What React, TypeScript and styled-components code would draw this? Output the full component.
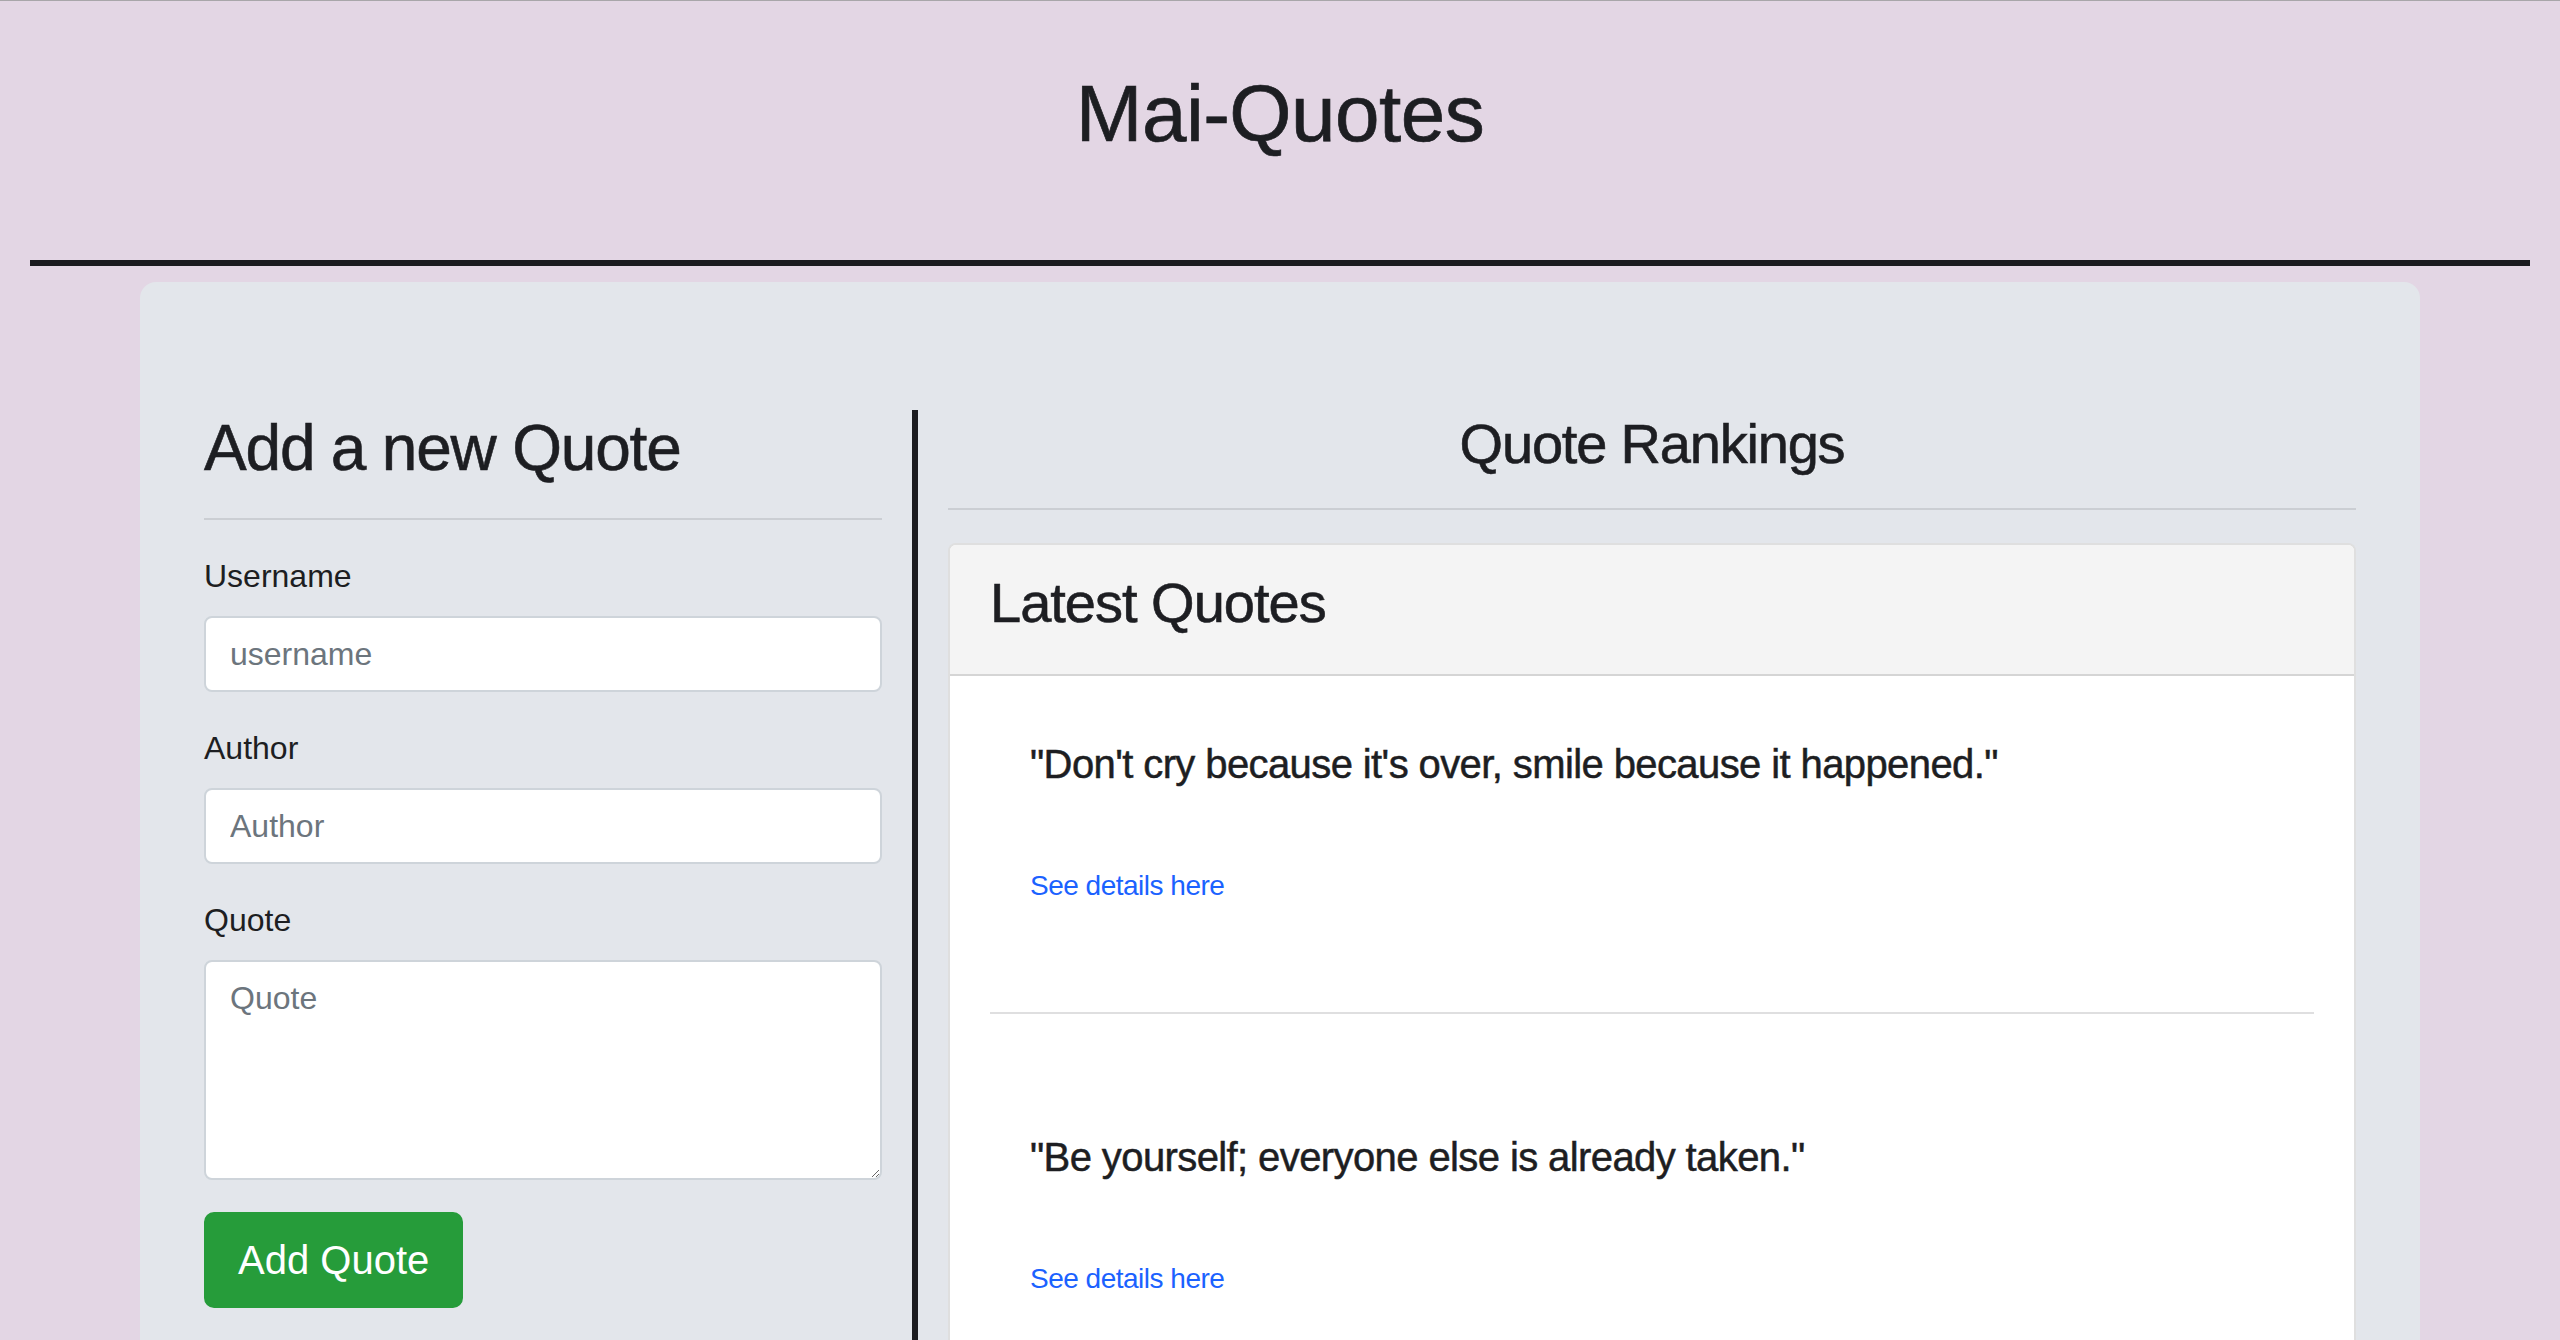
import React from "react";
import styled, { createGlobalStyle } from "styled-components";

const GlobalStyle = createGlobalStyle`
  html, body {
    margin: 0;
    padding: 0;
  }
  body {
    background: #e3d6e4;
    font-family: "Liberation Sans", Arial, Helvetica, sans-serif;
    color: #1d1e22;
  }
  * { box-sizing: border-box; }
`;

const Page = styled.div`
  border-top: 1px solid #a8a6a9;
  min-height: 1340px;
`;

const Header = styled.header`
  padding-top: 65px;
  text-align: center;
`;

const Title = styled.h1`
  margin: 0;
  font-size: 80px;
  line-height: 96px;
  font-weight: 400;
  letter-spacing: -0.5px;
  -webkit-text-stroke: 0.7px #1d1e22;
`;

const HeaderRule = styled.div`
  margin: 98px 30px 16px;
  height: 6px;
  background: #1b1b1f;
`;

const Container = styled.main`
  width: 2280px;
  margin: 0 auto;
  background: #e3e6eb;
  border-radius: 16px 16px 0 0;
  padding: 128px 64px 40px;
  min-height: 1060px;
`;

const Row = styled.div`
  display: flex;
  align-items: stretch;
`;

const FormColumn = styled.section`
  width: 714px;
  flex: 0 0 714px;
  padding-right: 30px;
  border-right: 6px solid #1c1c20;
  min-height: 930px;
`;

const RankColumn = styled.section`
  flex: 1;
  padding-left: 30px;
  min-width: 0;
`;

const SectionTitle = styled.h2<{ $size: number; $center?: boolean }>`
  margin: 0;
  font-size: ${(p) => p.$size}px;
  line-height: ${(p) => Math.round(p.$size * 1.2)}px;
  font-weight: 400;
  letter-spacing: -1.2px;
  -webkit-text-stroke: 0.6px #1d1e22;
  text-align: ${(p) => (p.$center ? "center" : "left")};
`;

const Rule = styled.hr<{ $after: number }>`
  margin: 31px 0 ${(p) => p.$after}px;
  border: 0;
  border-top: 2px solid rgba(0, 0, 0, 0.1);
`;

const FormGroup = styled.div`
  margin-bottom: 32px;
`;

const Label = styled.label`
  display: block;
  font-size: 32px;
  line-height: 48px;
  margin-bottom: 16px;
`;

const fieldStyles = `
  display: block;
  width: 100%;
  font-family: "Liberation Sans", Arial, Helvetica, sans-serif;
  font-size: 32px;
  line-height: 48px;
  color: #495057;
  background: #ffffff;
  border: 2px solid #ced4da;
  border-radius: 8px;
  padding: 12px 24px;
  outline: none;
  &::placeholder { color: #6c757d; }
`;

const Input = styled.input`
  ${fieldStyles}
  height: 76px;
`;

const TextArea = styled.textarea`
  ${fieldStyles}
  height: 220px;
  resize: vertical;
`;

const SubmitButton = styled.button`
  font-family: "Liberation Sans", Arial, Helvetica, sans-serif;
  font-size: 40px;
  line-height: 60px;
  padding: 16px 32px;
  color: #ffffff;
  background: #269c3a;
  border: 2px solid #269c3a;
  border-radius: 10px;
  cursor: pointer;
`;

const Card = styled.div`
  margin-top: 33px;
  background: #ffffff;
  border: 2px solid rgba(0, 0, 0, 0.125);
  border-radius: 8px;
  min-height: 800px;
`;

const CardHeader = styled.div`
  background: #f4f4f4;
  padding: 24px 40px 22px;
  border-bottom: 2px solid rgba(0, 0, 0, 0.125);
  border-radius: 6px 6px 0 0;
`;

const CardHeading = styled.h3`
  margin: 0 0 16px;
  font-size: 56px;
  line-height: 67px;
  font-weight: 400;
  letter-spacing: -1px;
  -webkit-text-stroke: 0.6px #1d1e22;
`;

const CardBody = styled.div`
  padding: 0 40px;
`;

const QuoteItem = styled.article<{ $first?: boolean }>`
  padding: ${(p) => (p.$first ? 64 : 119)}px 40px 105px;
`;

const QuoteText = styled.h5`
  margin: 0 0 77px;
  font-size: 40px;
  line-height: 48px;
  font-weight: 400;
  letter-spacing: -0.6px;
  -webkit-text-stroke: 0.5px #1d1e22;
`;

const DetailsLink = styled.a`
  display: inline-block;
  font-size: 28px;
  line-height: 42px;
  color: #1b62ff;
  text-decoration: none;
  letter-spacing: -0.5px;
`;

const Divider = styled.div`
  height: 2px;
  background: #dfdfe0;
`;

const quotes = [
  "\"Don't cry because it's over, smile because it happened.\"",
  "\"Be yourself; everyone else is already taken.\"",
];

export default function App() {
  return (
    <>
      <GlobalStyle />
      <Page>
        <Header>
          <Title>Mai-Quotes</Title>
        </Header>
        <HeaderRule />
        <Container>
          <Row>
            <FormColumn>
              <SectionTitle $size={64}>Add a new Quote</SectionTitle>
              <Rule $after={32} />
              <form onSubmit={(e) => e.preventDefault()}>
                <FormGroup>
                  <Label htmlFor="username">Username</Label>
                  <Input id="username" placeholder="username" />
                </FormGroup>
                <FormGroup>
                  <Label htmlFor="author">Author</Label>
                  <Input id="author" placeholder="Author" />
                </FormGroup>
                <FormGroup>
                  <Label htmlFor="quote">Quote</Label>
                  <TextArea id="quote" placeholder="Quote" rows={4} />
                </FormGroup>
                <SubmitButton type="submit">Add Quote</SubmitButton>
              </form>
            </FormColumn>
            <RankColumn>
              <SectionTitle $size={56} $center>
                Quote Rankings
              </SectionTitle>
              <Rule $after={0} />
              <Card>
                <CardHeader>
                  <CardHeading>Latest Quotes</CardHeading>
                </CardHeader>
                <CardBody>
                  {quotes.map((q, i) => (
                    <React.Fragment key={q}>
                      {i > 0 && <Divider />}
                      <QuoteItem $first={i === 0}>
                        <QuoteText>{q}</QuoteText>
                        <DetailsLink href="#">See details here</DetailsLink>
                      </QuoteItem>
                    </React.Fragment>
                  ))}
                </CardBody>
              </Card>
            </RankColumn>
          </Row>
        </Container>
      </Page>
    </>
  );
}
